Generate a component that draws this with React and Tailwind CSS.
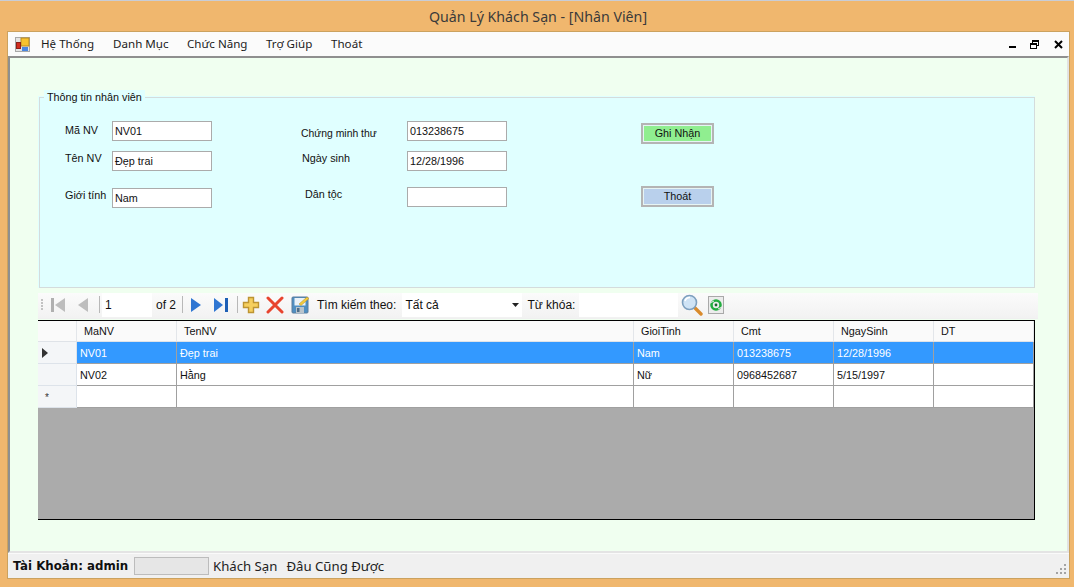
const sans = "font-['Liberation_Sans',sans-serif]";

const menus = [
  { label: 'Hệ Thống', w: 'w-[72px]' },
  { label: 'Danh Mục', w: 'w-[74px]' },
  { label: 'Chức Năng', w: 'w-[79px]' },
  { label: 'Trợ Giúp', w: 'w-[65px]' },
  { label: 'Thoát', w: 'w-[50px]' },
];

const columns = [
  { name: 'MaNV', w: 'w-[100px]' },
  { name: 'TenNV', w: 'w-[457px]' },
  { name: 'GioiTinh', w: 'w-[100px]' },
  { name: 'Cmt', w: 'w-[100px]' },
  { name: 'NgaySinh', w: 'w-[100px]' },
  { name: 'DT', w: 'flex-1' },
];

const rows = [
  { cells: ['NV01', 'Đẹp trai', 'Nam', '013238675', '12/28/1996', ''], selected: true },
  { cells: ['NV02', 'Hằng', 'Nữ', '0968452687', '5/15/1997', ''] },
  { cells: ['', '', '', '', '', ''], isNew: true },
];

function AppIcon() {
  return (
    <svg width="15" height="15" viewBox="0 0 15 15">
      <rect x="0.5" y="0.5" width="14" height="14" fill="#e4e4e4" stroke="#a8a8a8" />
      <rect x="6" y="1" width="8" height="8" fill="#f7c22e" stroke="#b98a22" />
      <rect x="1.5" y="5.5" width="4" height="6" fill="#d22c1e" stroke="#8e2018" />
      <rect x="7" y="10" width="6" height="4" fill="#4a86e0" />
    </svg>
  );
}

function FormField({ label, value, labelClass, inputClass }) {
  return (
    <div className={`flex items-start ${inputClass}`}>
      <span className={`${labelClass} shrink-0 leading-[13px] whitespace-nowrap`}>{label}</span>
      <div className="w-[100px] h-5 bg-white border border-[#ababab] px-[2px] pt-px flex items-center leading-none">{value}</div>
    </div>
  );
}

function NavIcon({ dir, bar, active }) {
  const fill = active ? '#2f76d2' : '#bdbdbd';
  const left = dir === 'left';
  let d = 'M0 1 L0 15 L10 8 Z';
  if (left && bar) d = 'M14 1 L14 15 L4 8 Z';
  if (left && !bar) d = 'M10 1 L10 15 L0 8 Z';
  if (!left && bar) d = 'M0 1 L0 15 L9 8 Z';
  return (
    <svg width="15" height="16" viewBox="0 0 15 16" className="shrink-0">
      <path d={d} fill={fill} />
      {bar && <rect x={left ? 0 : 11} y="1" width="3" height="14" fill={active ? '#1d5fb5' : '#b0b0b0'} />}
    </svg>
  );
}

function Sep() {
  return <div className="w-px h-[17px] bg-[#b8b8b8] shrink-0" />;
}

function Toolbar() {
  return (
    <div className={`${sans} w-[1000px] h-[26px] pb-[2px] flex items-center text-[12px] text-[#111] bg-gradient-to-b from-[#fbfbfb] to-[#f2f2f2] border-b border-[#f0f0f0]`}>
      <div className="ml-[3px] mr-[6px] flex flex-col gap-[1px] shrink-0">
        <span className="w-[2px] h-[2px] bg-[#c2c2c2]" />
        <span className="w-[2px] h-[2px] bg-[#c2c2c2]" />
        <span className="w-[2px] h-[2px] bg-[#c2c2c2]" />
        <span className="w-[2px] h-[2px] bg-[#c2c2c2]" />
      </div>
      <div className="ml-[2px]"><NavIcon dir="left" bar /></div>
      <div className="ml-[12px]"><NavIcon dir="left" /></div>
      <div className="ml-[6px]"><Sep /></div>
      <div className="ml-[2px] w-[50px] h-[24px] bg-white flex items-center pl-[3px] shrink-0">1</div>
      <span className="ml-[4px]">of 2</span>
      <div className="ml-[6px]"><Sep /></div>
      <div className="ml-[8px]"><NavIcon dir="right" active /></div>
      <div className="ml-[8px]"><NavIcon dir="right" bar active /></div>
      <div className="ml-[8px]"><Sep /></div>
      <svg width="18" height="18" viewBox="0 0 18 18" className="ml-[4px] shrink-0">
        <path d="M6.5 1.5 H11.5 V6.5 H16.5 V11.5 H11.5 V16.5 H6.5 V11.5 H1.5 V6.5 H6.5 Z" fill="#f6cf5e" stroke="#bd9433" strokeWidth="1.4" />
      </svg>
      <svg width="18" height="18" viewBox="0 0 18 18" className="ml-[6px] shrink-0">
        <path d="M2 2 L16 16 M16 2 L2 16" stroke="#e8442e" strokeWidth="3" strokeLinecap="round" />
      </svg>
      <svg width="18" height="18" viewBox="0 0 18 18" className="ml-[7px] shrink-0">
        <rect x="1" y="1" width="16" height="16" rx="1" fill="#4f8fc2" stroke="#5b7d9c" />
        <rect x="3.5" y="2" width="11" height="7.5" fill="#e9f1f7" />
        <rect x="5" y="11" width="8" height="6" fill="#b9c4cc" />
        <rect x="6" y="12" width="2.5" height="4" fill="#4d6d88" />
        <path d="M8 8 L16 1 L18 2.5 L10 9.5 Z" fill="#f3cb3d" stroke="#b78d1e" strokeWidth="0.5" />
      </svg>
      <span className="ml-[8px] whitespace-nowrap">Tìm kiếm theo:</span>
      <div className="ml-[6px] w-[120px] h-[24px] bg-white flex items-center pl-[3px] shrink-0">
        Tất cả
        <svg width="7" height="4" viewBox="0 0 7 4" className="ml-auto mr-[3px]"><path d="M0 0 H7 L3.5 4 Z" fill="#222" /></svg>
      </div>
      <span className="ml-[5px] whitespace-nowrap">Từ khóa:</span>
      <div className="ml-[4px] w-[99px] h-[24px] bg-white shrink-0" />
      <svg width="22" height="22" viewBox="0 0 22 22" className="ml-[3px] shrink-0">
        <path d="M13 13 L20 20" stroke="#d98a2b" strokeWidth="3.4" strokeLinecap="round" />
        <circle cx="8.5" cy="8.5" r="7" fill="#cfe3f5" stroke="#7d9fbe" strokeWidth="1.6" />
        <path d="M4 7 A5 5 0 0 1 9 3.5" fill="none" stroke="#ffffff" strokeWidth="1.6" />
      </svg>
      <svg width="16" height="18" viewBox="0 0 16 18" className="ml-[5px] shrink-0">
        <rect x="0.5" y="0.5" width="15" height="17" fill="#ececec" stroke="#a9a9a9" />
        <circle cx="8" cy="9" r="4.5" fill="none" stroke="#22ad3f" strokeWidth="2.6" />
        <path d="M2 7 L6 5 M14 11 L10 13" stroke="#ececec" strokeWidth="1" />
        <circle cx="8" cy="9" r="1.4" fill="#14692a" />
      </svg>
    </div>
  );
}

function Grid() {
  return (
    <div className={`${sans} mt-px w-[997px] h-[200px] bg-[#ababab] border border-black border-l-0 text-[10.8px] text-[#111] flex flex-col`}>
      <div className="h-[21px] flex bg-[#fafafa] border-b border-[#dfe3e8] shrink-0">
        <div className="w-[39px] border-r border-[#e3e6ea] shrink-0" />
        {columns.map(c => (
          <div key={c.name} className={`${c.w} border-r border-[#e3e6ea] pl-[7px] pt-px flex items-center shrink-0`}>{c.name}</div>
        ))}
      </div>
      {rows.map((r, i) => (
        <div key={i} className="h-[22px] flex shrink-0">
          <div className="w-[39px] bg-[#f4f6f8] border-r border-b border-[#dde3ea] flex items-center justify-start pl-[4px] shrink-0">
            {r.selected && <svg width="7" height="10" viewBox="0 0 7 10"><path d="M0 0 L6 5 L0 10 Z" fill="#333" /></svg>}
            {r.isNew && <span className="ml-[3px] mt-[3px] text-[10px] leading-none text-[#333]">*</span>}
          </div>
          {r.cells.map((cell, j) => (
            <div
              key={j}
              className={`${columns[j].w} shrink-0 pl-[3px] pt-px flex items-center border-r border-b border-[#a0a0a0] ${r.selected ? 'bg-[#3399ff] text-white' : 'bg-white'}`}
            >
              {cell}
            </div>
          ))}
        </div>
      ))}
    </div>
  );
}

export default function App() {
  return (
    <div className="w-[1074px] h-[587px] bg-[#f0b76e] flex flex-col overflow-hidden">
      <div className="h-px bg-[#c9cdd6] shrink-0" />
      <div className="h-[30px] shrink-0 flex items-center justify-center pl-[2px] pt-[2px] font-['Noto_Sans',sans-serif] text-[14.2px] text-[#3a3a3a]">
        Quản Lý Khách Sạn - [Nhân Viên]
      </div>
      <div className="flex-1 ml-[7px] mr-[4px] mb-[8px] border border-[#cba25f] flex flex-col min-h-0">
        <div className="h-[24px] bg-[#fbfbfb] shrink-0 flex items-center font-['Noto_Sans',sans-serif] text-[11.6px] text-[#1c1c1c]">
          <div className="ml-[7px] mr-[10px]"><AppIcon /></div>
          {menus.map((m, i) => (
            <span key={i} className={`${m.w} shrink-0 whitespace-nowrap pl-[1px]`}>{m.label}</span>
          ))}
          <div className="ml-auto flex items-center">
            <span className="w-[7px] h-[2px] bg-black mt-[6px] mr-[14px]" />
            <span className="relative w-[9px] h-[9px] mr-[15px]">
              <span className="absolute right-0 top-0 w-[7px] h-[6px] border border-black border-t-2" />
              <span className="absolute left-0 bottom-0 w-[7px] h-[6px] border border-black border-t-2 bg-[#fbfbfb]" />
            </span>
            <svg width="9" height="9" viewBox="0 0 9 9" className="mr-[6px]"><path d="M1 1 L8 8 M8 1 L1 8" stroke="#000" strokeWidth="2" /></svg>
          </div>
        </div>
        <div className="flex-1 min-h-0 bg-[#f0fff0] border-l-2 border-t-2 border-[#8f8f8f] border-r-2 border-r-[#e2e2e2] border-b-2 border-b-[#e4e4e4] pl-[28px] pt-[38px]">
          <div className={`${sans} relative w-[997px] h-[192px] bg-[#e0ffff] text-[10.8px] text-[#111]`}>
            <div className="absolute left-px top-[1px] right-0 bottom-0 border border-[#d4dcdc]" />
            <span className="absolute left-[6px] -top-[6px] bg-[#e0ffff] px-[3px] leading-[14px]">Thông tin nhân viên</span>
            <div className="relative flex pt-[25px]">
              <div className="flex flex-col pl-[27px] w-[253px]">
                <FormField label="Mã NV" value="NV01" labelClass="w-[47px] pt-[3px]" inputClass="" />
                <FormField label="Tên NV" value="Đẹp trai" labelClass="w-[47px] pt-[1px]" inputClass="mt-[10px]" />
                <FormField label="Giới tính" value="Nam" labelClass="w-[47px] pt-[1px]" inputClass="mt-[17px]" />
              </div>
              <div className="flex flex-col">
                <FormField label="Chứng minh thư" value="013238675" labelClass="w-[106px] ml-[10px] pt-[6px] text-[10.4px]" inputClass="" />
                <FormField label="Ngày sinh" value="12/28/1996" labelClass="w-[105px] ml-[11px] pt-[1px]" inputClass="mt-[10px]" />
                <FormField label="Dân tộc" value="" labelClass="w-[102px] ml-[14px] pt-[1px]" inputClass="mt-[16px]" />
              </div>
              <div className="flex flex-col ml-[134px] mt-[2px]">
                <button className="w-[73px] h-[21px] border-2 border-[#b4b4b4] p-[1px] bg-[#e6f4f4]">
                  <span className="flex h-full items-center justify-center bg-[#90ee90]">Ghi Nhận</span>
                </button>
                <button className="w-[73px] h-[21px] mt-[42px] border-2 border-[#b4b4b4] p-[1px] bg-[#e6f4f4]">
                  <span className="flex h-full items-center justify-center bg-[#b9d0ec]">Thoát</span>
                </button>
              </div>
            </div>
          </div>
          <div className="mt-[5px]"><Toolbar /></div>
          <Grid />
        </div>
        <div className="h-[25px] bg-[#f0f0f0] shrink-0 border-t border-[#fafafa] pt-[2px] flex items-center relative">
          <span className="ml-[5px] font-['DejaVu_Sans',sans-serif] font-bold text-[11.8px] text-[#111] w-[121px] shrink-0 whitespace-nowrap">Tài Khoản: admin</span>
          <div className="w-[75px] h-[18px] -mt-[2px] bg-[#e6e6e6] border border-[#bcbcbc] shrink-0" />
          <span className="ml-[4px] font-['Noto_Sans',sans-serif] text-[13.2px] text-[#222] whitespace-nowrap">Khách Sạn</span>
          <span className="ml-[9px] font-['Noto_Sans',sans-serif] text-[13.2px] text-[#222] whitespace-nowrap">Đâu Cũng Được</span>
          <svg width="12" height="12" viewBox="0 0 12 12" className="absolute right-[1px] bottom-[2px]" fill="#a3a3a3">
            <rect x="8" y="0" width="2" height="2" />
            <rect x="4" y="4" width="2" height="2" />
            <rect x="8" y="4" width="2" height="2" />
            <rect x="0" y="8" width="2" height="2" />
            <rect x="4" y="8" width="2" height="2" />
            <rect x="8" y="8" width="2" height="2" />
          </svg>
        </div>
      </div>
    </div>
  );
}
